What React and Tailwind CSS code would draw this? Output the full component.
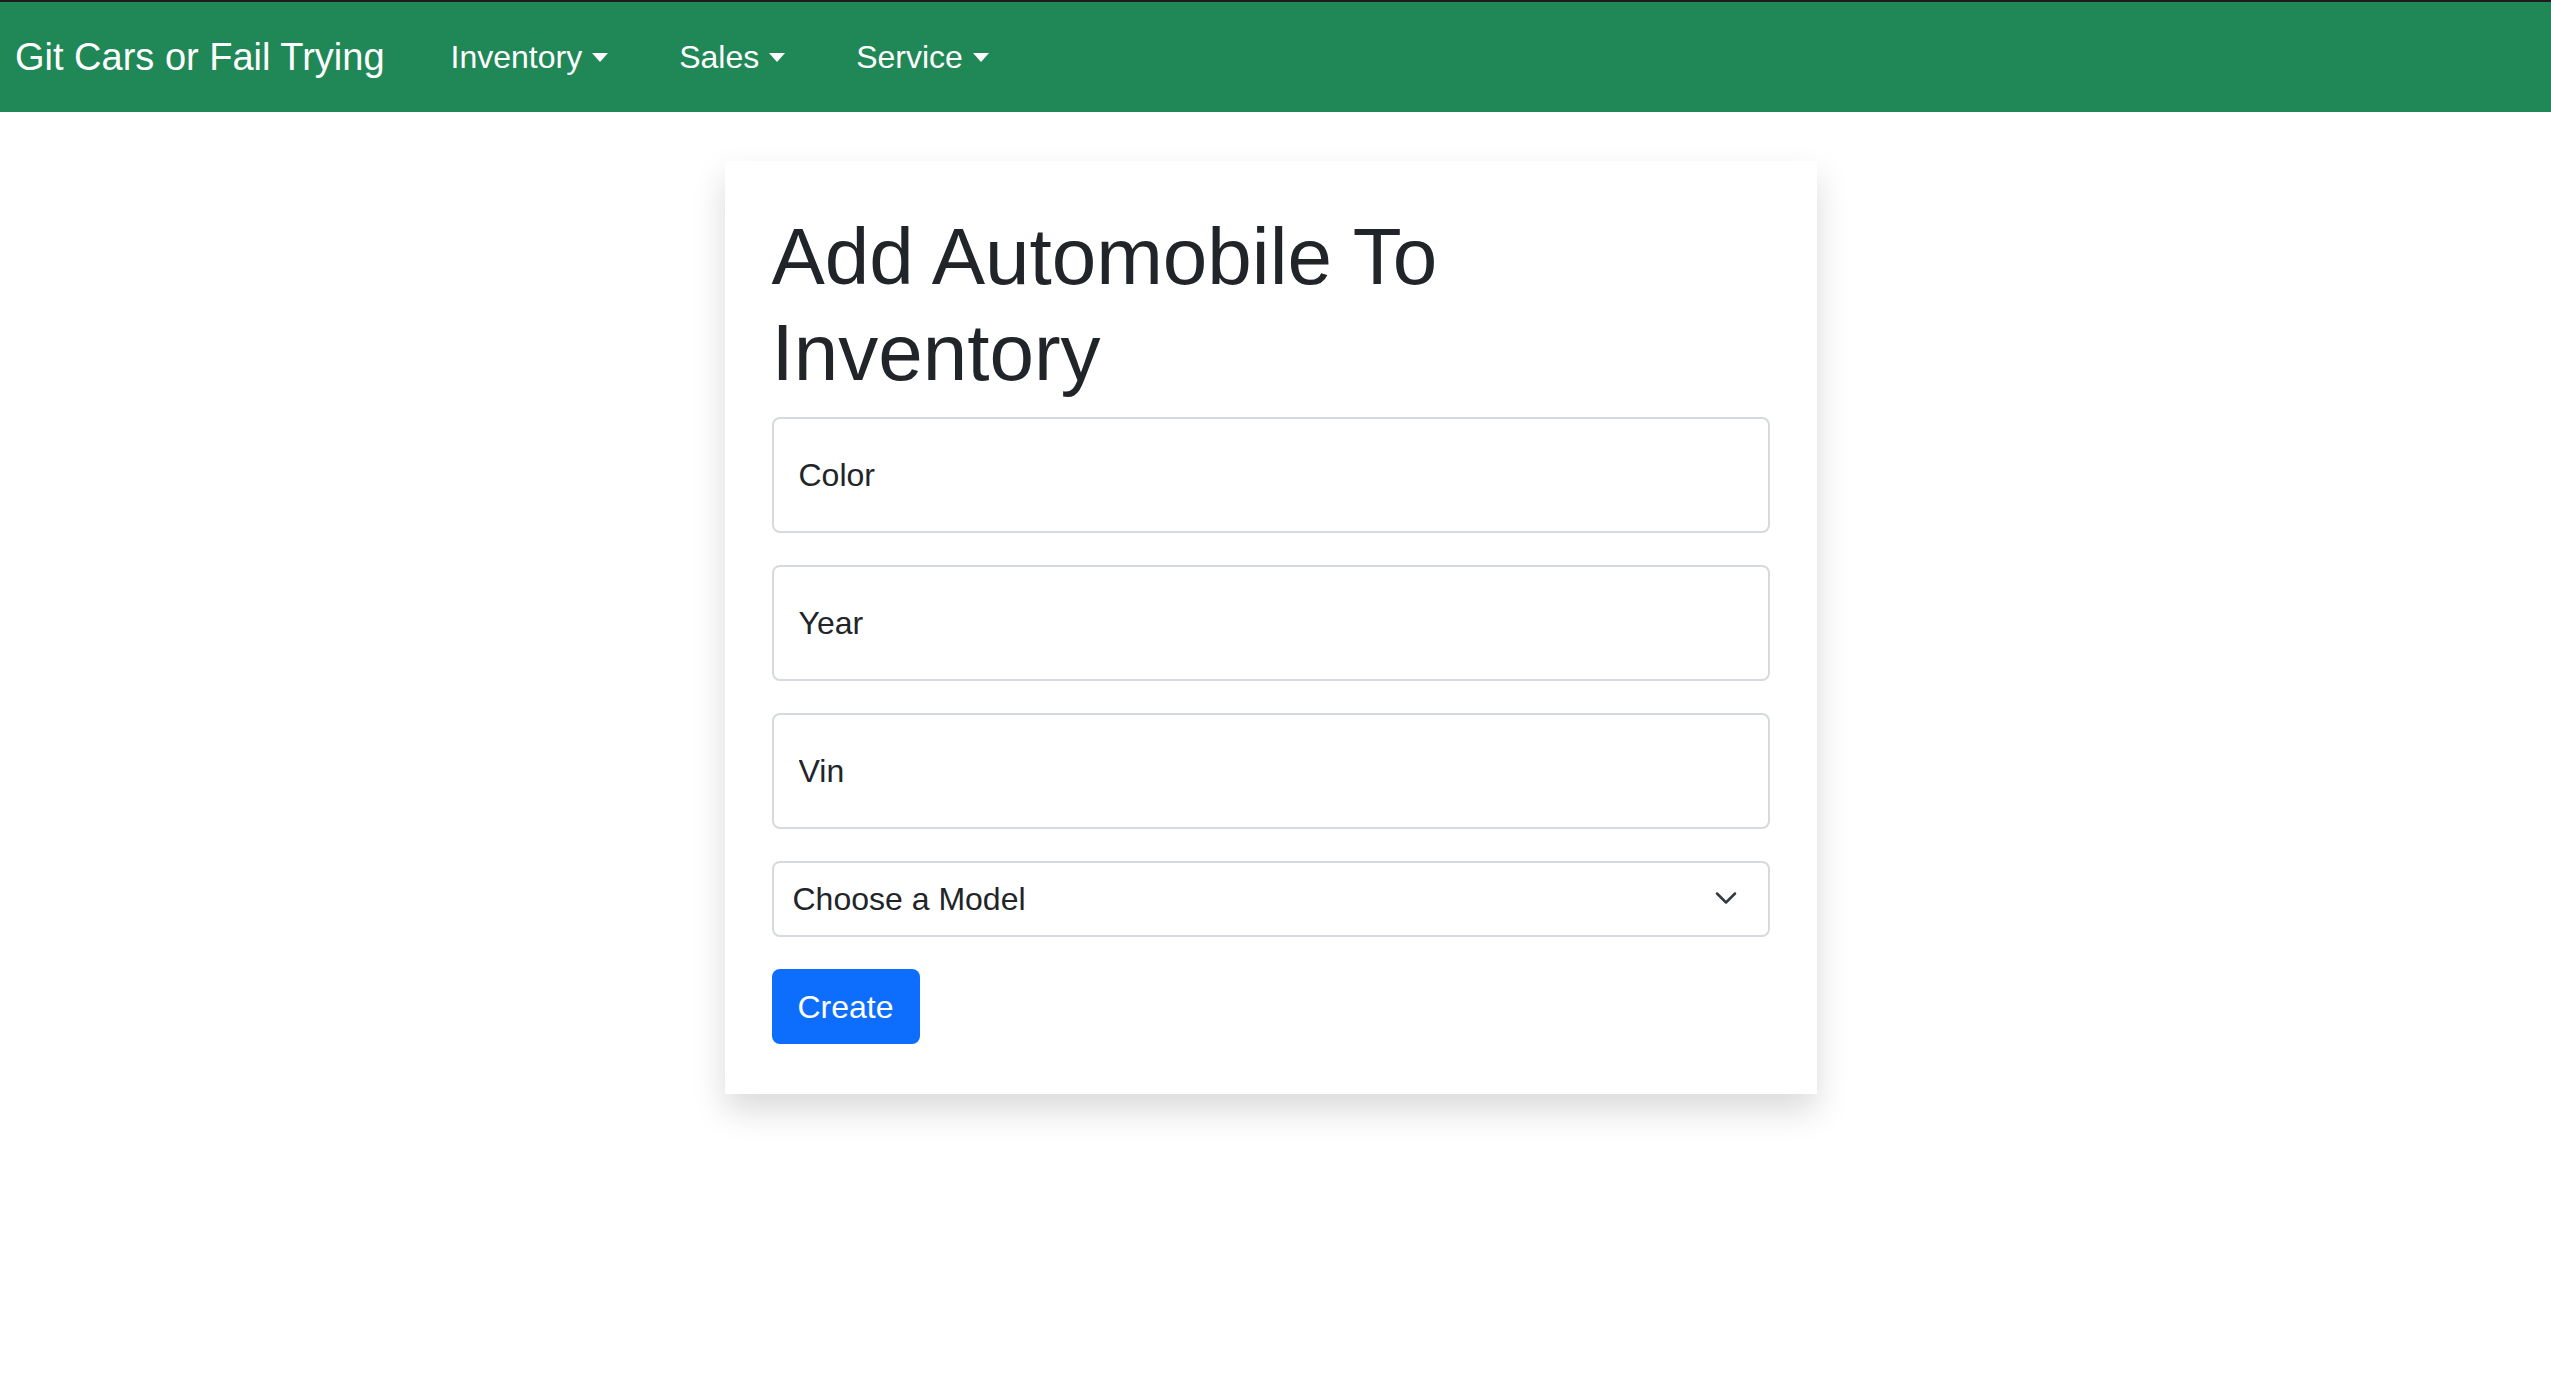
import { useState } from "react";

const Caret = () => <span className="ml-[10px] inline-block h-0 w-0 border-x-[8px] border-t-[9px] border-x-transparent border-t-white"></span>;

const NavItem = ({ label }) => (
  <li className="flex items-center text-[32px] text-white">
    <span>{label}</span>
    <Caret />
  </li>
);

const FloatingInput = ({ label, value, onChange }) => (
  <div className="mb-[32px]">
    <input
      className="h-[116px] w-full rounded-[8px] border-2 border-[#d6dadf] bg-white px-[25px] text-[32px] text-[#212529] placeholder:text-[#212529] outline-none"
      placeholder={label}
      value={value}
      onChange={(e) => onChange(e.target.value)}
    />
  </div>
);

const App = () => {
  const [color, setColor] = useState("");
  const [year, setYear] = useState("");
  const [vin, setVin] = useState("");
  const [model, setModel] = useState("");

  return (
    <div className="min-h-[1375px] bg-white font-['Liberation_Sans',Arial,sans-serif] text-[#212529]">
      {/* navbar */}
      <nav className="flex h-[112px] items-center border-t-2 border-[#1c1c1c] bg-[#208757] pl-[15px]">
        <span className="mr-[66px] text-[38px] text-white">Git Cars or Fail Trying</span>
        <ul className="flex items-center gap-[71px]">
          <NavItem label="Inventory" />
          <NavItem label="Sales" />
          <NavItem label="Service" />
        </ul>
      </nav>

      <div className="flex justify-center pt-[49px] pr-[10px]">
        <div className="w-[1092px] bg-white px-[47px] pt-[48px] pb-[50px] shadow-[0_16px_32px_rgba(0,0,0,0.15)]">
          <h1 className="mb-[16px] text-[80px] leading-[96px] font-medium">Add Automobile To Inventory</h1>
          <form onSubmit={(e) => e.preventDefault()}>
            <FloatingInput label="Color" value={color} onChange={setColor} />
            <FloatingInput label="Year" value={year} onChange={setYear} />
            <FloatingInput label="Vin" value={vin} onChange={setVin} />
            <div className="relative mb-[32px]">
              <select
                value={model}
                onChange={(e) => setModel(e.target.value)}
                className="h-[76px] w-full appearance-none rounded-[8px] border-2 border-[#d6dadf] bg-white pl-[19px] text-[32px] text-[#212529] outline-none"
              >
                <option value="">Choose a Model</option>
              </select>
              <svg className="pointer-events-none absolute top-[28px] right-[32px]" width="24" height="18" viewBox="0 0 16 12" fill="none">
                <path d="M2 3l6 6 6-6" stroke="#343a40" strokeWidth="1.7" strokeLinecap="round" strokeLinejoin="round" />
              </svg>
            </div>
            <button className="h-[75px] rounded-[8px] bg-[#0d6efd] px-[26px] text-[32px] text-white">Create</button>
          </form>
        </div>
      </div>
    </div>
  );
};

export default App;
